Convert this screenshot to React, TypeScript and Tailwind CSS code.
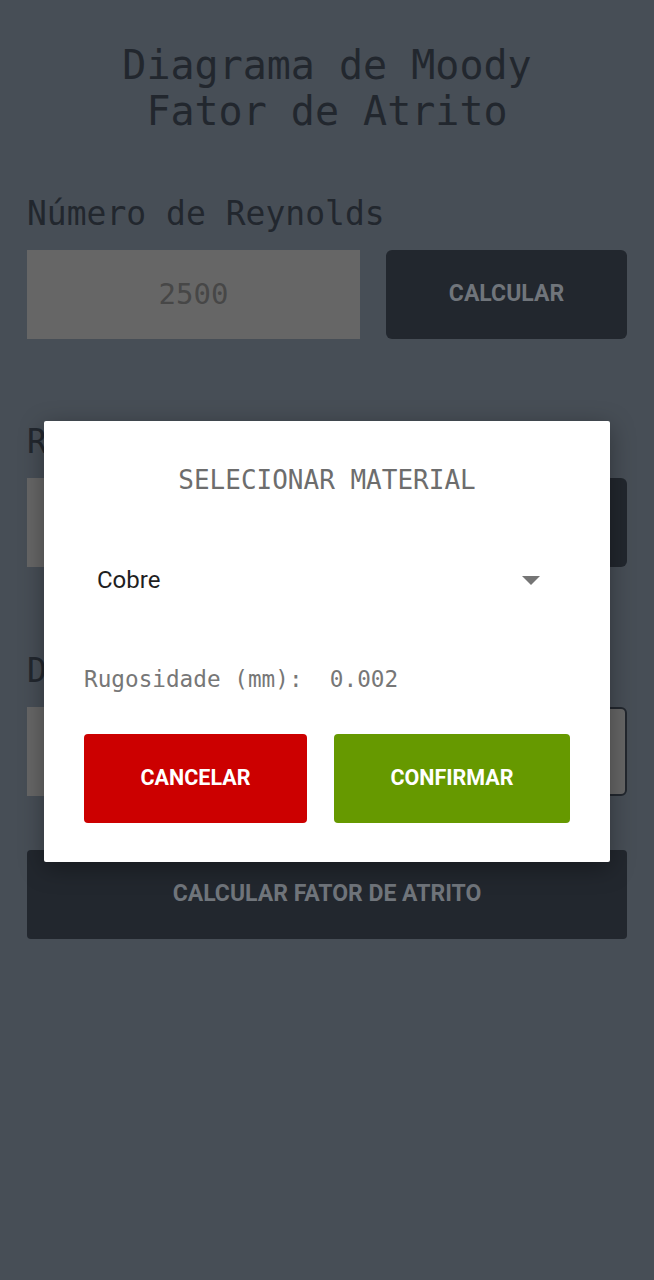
const mono = "font-['DejaVu_Sans_Mono','Liberation_Mono',monospace]";
const roboto = "font-['Roboto','Liberation_Sans',sans-serif]";

function Label({ text, className }: { text: string; className?: string }) {
  return (
    <div className={`${mono} text-[33px] leading-[40px] text-[#22272e] ${className ?? ""}`}>
      {text}
    </div>
  );
}

export default function App() {
  return (
    <main className="relative min-h-[1280px] w-full bg-[#474e56]">
      <div className="flex flex-col px-[27px] pt-[42px]">
        <h1 className={`${mono} text-center text-[40px] leading-[46px] text-[#22272e]`}>
          Diagrama de Moody
          <br />
          Fator de Atrito
        </h1>

        <Label text="Número de Reynolds" className="mt-[60px]" />
        <div className="mt-[16px] flex h-[89px] gap-[26px]">
          <div className={`${mono} flex w-[333px] items-center justify-center bg-[#666666] text-[29px] text-[#474747]`}>
            2500
          </div>
          <button className={`${roboto} flex-1 rounded-[6px] bg-[#22272e] text-[23px] font-bold text-[#70757b]`}>
            CALCULAR
          </button>
        </div>

        <Label text="Rugosidade Relativa" className="mt-[83px]" />
        <div className="mt-[16px] flex h-[89px] gap-[26px]">
          <div className="w-[333px] bg-[#666666]" />
          <button className={`${roboto} flex-1 rounded-[6px] bg-[#22272e] text-[23px] font-bold text-[#70757b]`}>
            MATERIAL
          </button>
        </div>

        <Label text="Diâmetro" className="mt-[84px]" />
        <div className="mt-[16px] flex h-[89px] gap-[26px]">
          <div className="w-[333px] bg-[#666666]" />
          <div className="flex-1 rounded-[6px] border-[2px] border-[#22272e] bg-[#666666]" />
        </div>

        <button className={`${roboto} mt-[54px] h-[89px] rounded-[4px] bg-[#22272e] text-[23px] font-bold text-[#70757b]`}>
          CALCULAR FATOR DE ATRITO
        </button>
      </div>

      {/* dialog */}
      <div className="absolute left-[44px] top-[421px] flex h-[441px] w-[566px] flex-col rounded-[2px] bg-white px-[40px] shadow-[0_6px_24px_rgba(0,0,0,0.35)]">
        <div className={`${mono} mt-[44px] text-center text-[26px] leading-[30px] text-[#6d6d6d]`}>
          SELECIONAR MATERIAL
        </div>
        <div className="mt-[70px] flex h-[30px] items-center justify-between pl-[13px] pr-[30px]">
          <span className={`${roboto} text-[24px] text-[#1f1f1f]`}>Cobre</span>
          <svg width="18" height="9" viewBox="0 0 18 9">
            <path d="M0 0 L18 0 L9 9 Z" fill="#757575" />
          </svg>
        </div>
        <div className={`${mono} mt-[69px] whitespace-pre text-[22.7px] leading-[30px] text-[#777777]`}>
          {"Rugosidade (mm):  0.002"}
        </div>
        <div className="mt-[40px] flex h-[89px] gap-[27px]">
          <button className={`${roboto} w-[223px] rounded-[4px] bg-[#cc0000] text-[21.5px] font-bold text-white`}>
            CANCELAR
          </button>
          <button className={`${roboto} flex-1 rounded-[4px] bg-[#669900] text-[21.5px] font-bold text-white`}>
            CONFIRMAR
          </button>
        </div>
      </div>
    </main>
  );
}
